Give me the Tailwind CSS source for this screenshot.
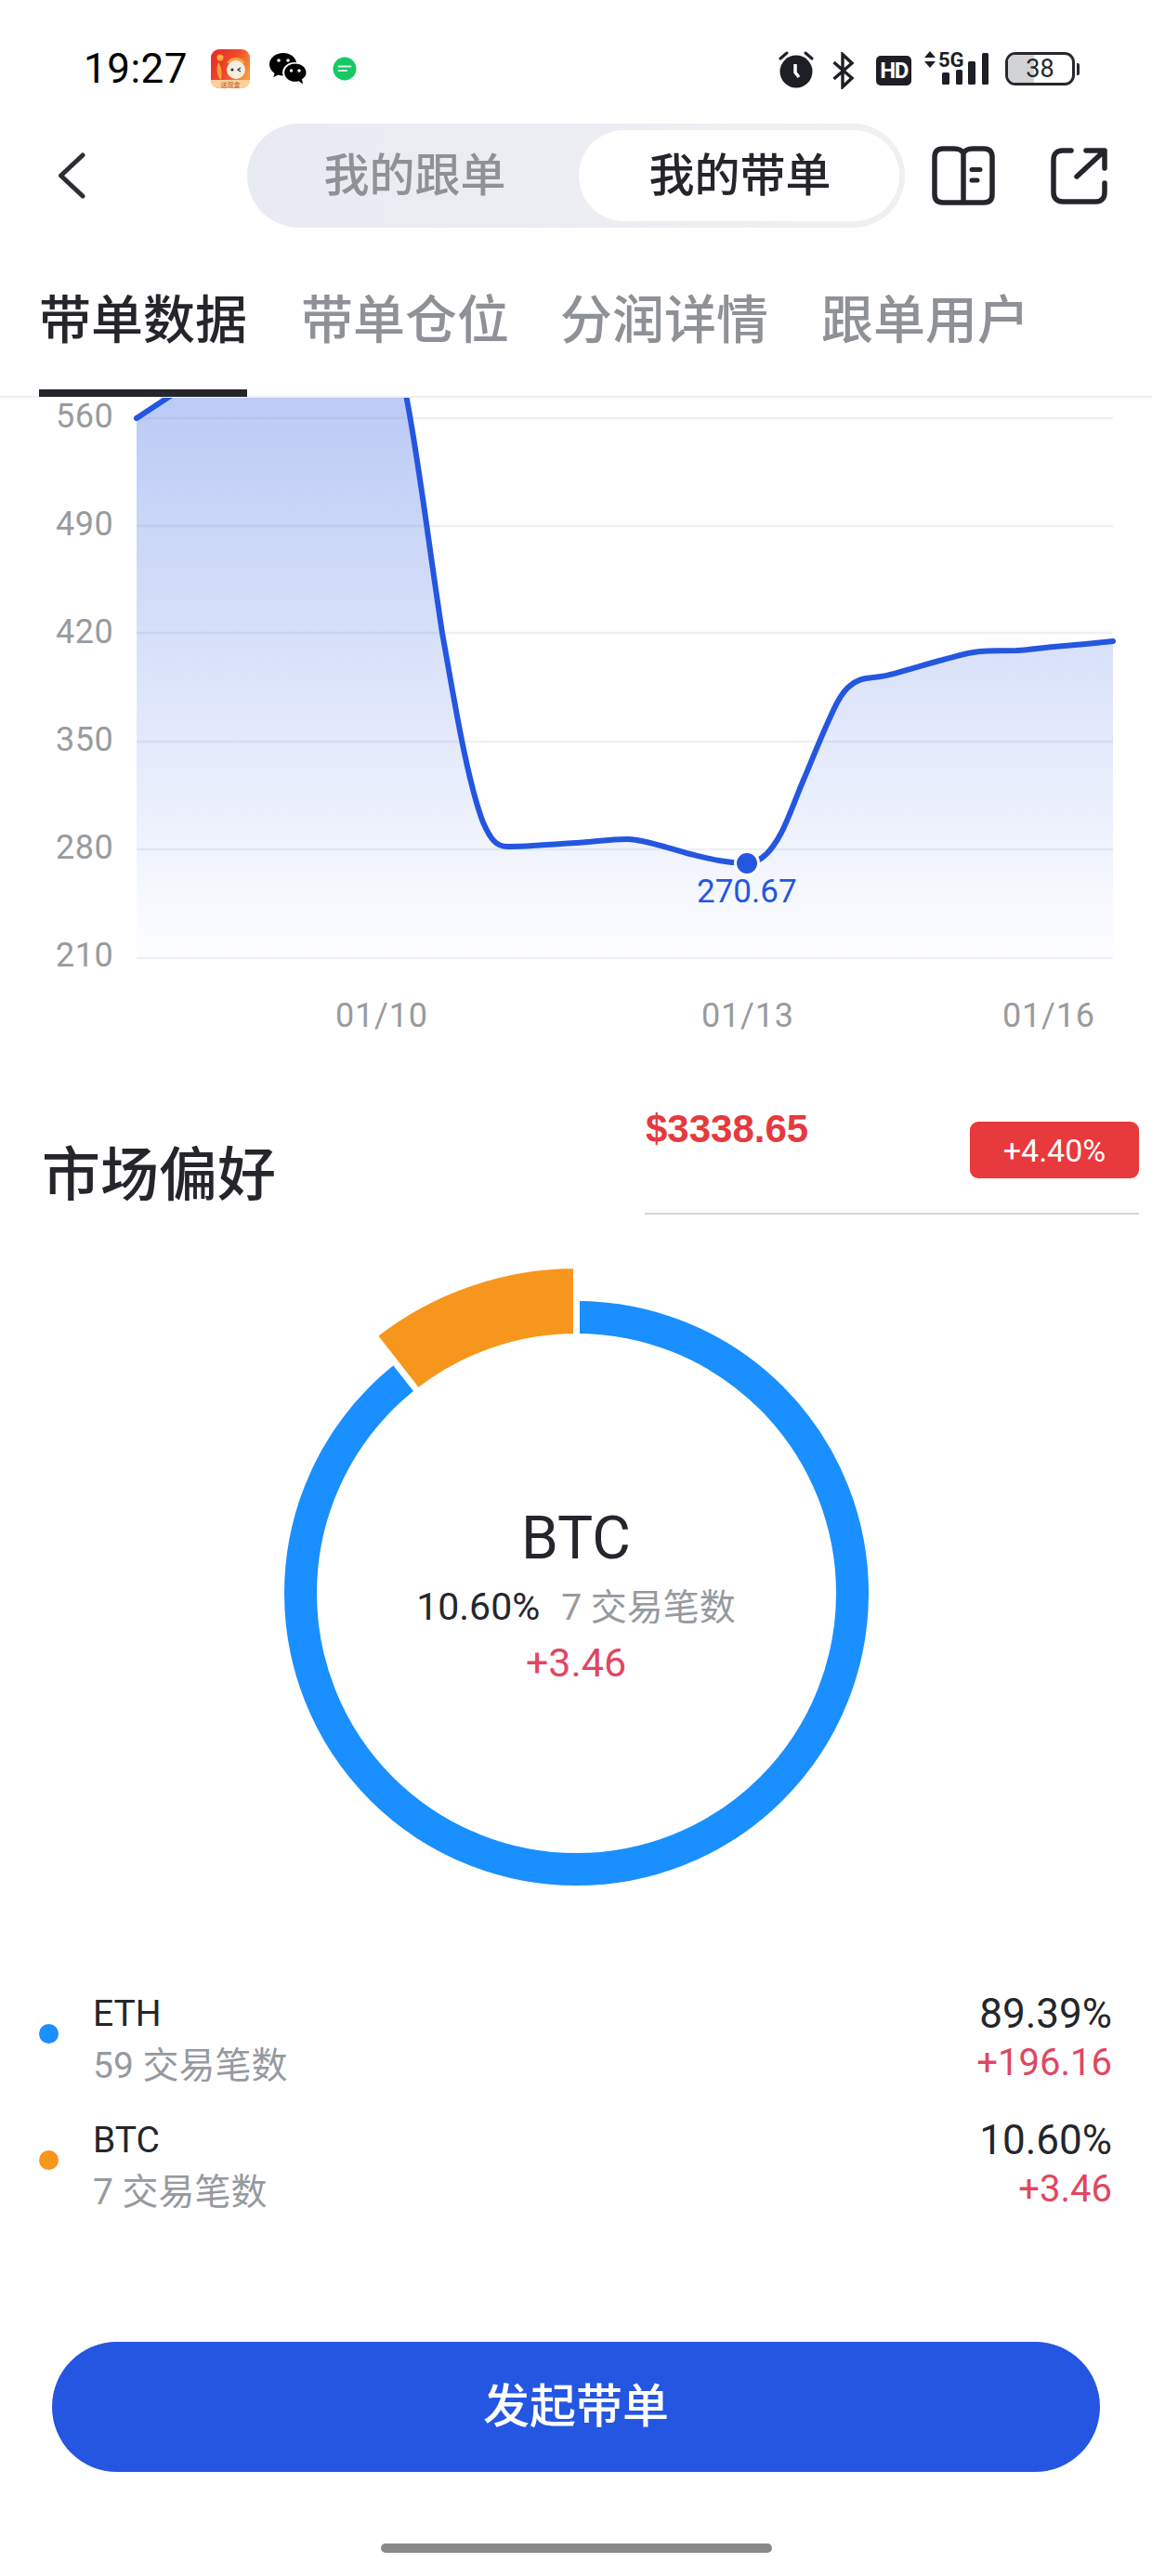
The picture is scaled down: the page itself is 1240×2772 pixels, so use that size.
<!DOCTYPE html>
<html lang="zh">
<head>
<meta charset="utf-8">
<script src="https://cdn.jsdelivr.net/npm/@tailwindcss/browser@4"></script>
</head>
<body class="bg-white">
<div class="w-[1240px] h-[2772px] bg-white overflow-hidden font-['Roboto','Noto_Sans_CJK_SC',sans-serif] text-[#24262b]">

  <!-- status bar -->
  <div class="h-[133px] relative">
    <div class="flex items-center pt-[53px] pl-[90px] h-[95px]">
      <span class="text-[44px] leading-none text-black w-[137px] tracking-[0.500px]">19:27</span>
      <svg class="w-[42px] h-[42px]" viewBox="0 0 42 42">
        <defs><linearGradient id="app" x1="0" y1="0" x2="1" y2="0.6"><stop offset="0" stop-color="#e8262a"/><stop offset="0.55" stop-color="#ef4a2c"/><stop offset="1" stop-color="#f79a3e"/></linearGradient></defs>
        <rect width="42" height="42" rx="9" fill="url(#app)"/>
        <path d="M0 33H42V33A9 9 0 0 1 33 42H9A9 9 0 0 1 0 33Z" fill="#fbd09a"/>
        <circle cx="10" cy="9" r="3.5" fill="#f7b23b"/>
        <path d="M8 14C5 22 7 30 11 33C12 26 12 20 8 14Z" fill="#f7a23b"/>
        <path d="M17 15C20 7 34 7 37 15Z" fill="#f6a33c"/>
        <circle cx="27" cy="22" r="10" fill="#f4ede2"/>
        <circle cx="23" cy="22" r="1.6" fill="#333"/>
        <path d="M32 20L29 22L32 24" stroke="#333" stroke-width="1.3" fill="none"/>
        <text x="21" y="40.5" text-anchor="middle" font-size="7" fill="#b5561c">送现金</text>
      </svg>
      <svg class="w-[40px] h-[34px] ml-[21px]" viewBox="0 0 40 34">
        <path d="M15 0C6.700 0 0 5.500 0 12.300C0 16.200 2.200 19.600 5.600 21.900L4.300 26.300L9.300 23.600C11 24.200 12.800 24.500 14.700 24.500C14.300 23.400 14.100 22.200 14.100 21C14.100 14.800 20 10 27.200 10C27.900 10 28.500 10 29.100 10.100C27.800 4.300 22 0 15 0Z" fill="#000"/>
        <path d="M39.500 21.200C39.500 15.600 34.100 11.600 27.700 11.600C21.300 11.600 16.200 15.900 16.200 21.200C16.200 26.500 21.300 30.800 27.700 30.800C29.100 30.800 30.400 30.600 31.600 30.200L36 33.500L35 28.300C37.800 26.500 39.500 24 39.500 21.200Z" fill="#000"/>
        <circle cx="10" cy="8" r="1.800" fill="#fff"/><circle cx="20" cy="8" r="1.800" fill="#fff"/>
        <circle cx="23.500" cy="19" r="1.700" fill="#fff"/><circle cx="32" cy="19" r="1.700" fill="#fff"/>
      </svg>
      <svg class="w-[26px] h-[26px] ml-[28px]" viewBox="0 0 26 26">
        <circle cx="13" cy="13" r="12.500" fill="#17c964"/>
        <path d="M6.500 10.500H19.500M6.500 15H15" stroke="#d8f7e5" stroke-width="2" stroke-linecap="round"/>
      </svg>
    </div>
    <div class="absolute left-[838px] top-[54px] flex items-start">
      <svg class="w-[38px] h-[41px]" viewBox="0 0 38 41">
        <circle cx="19" cy="23" r="17.500" fill="#1d1f24"/>
        <path d="M2 9L9 3M36 9L29 3" stroke="#1d1f24" stroke-width="3" stroke-linecap="round"/>
        <path d="M18 15V24L22 29" stroke="#fff" stroke-width="3.500" fill="none"/>
      </svg>
      <svg class="w-[24px] h-[40px] ml-[20px] mt-[2px]" viewBox="0 0 24 40">
        <path d="M1.500 11L21 28L11 37.500V2.500L21 12L1.500 29" stroke="#1d1f24" stroke-width="3.400" fill="none" stroke-linejoin="miter"/>
      </svg>
      <div class="w-[38px] h-[32px] mt-[6px] ml-[23px] rounded-[5px] bg-[#1d1f24] text-white flex items-center justify-center font-['Liberation_Sans_Narrow','Roboto',sans-serif] font-bold text-[24px] leading-none tracking-[-1.500px]">HD</div>
      <div class="relative w-[70px] h-[38px] ml-[14px] mt-[1px]">
        <svg class="absolute left-0 top-0 w-[70px] h-[38px]" viewBox="0 0 70 38">
          <path d="M6 0L12 7H0ZM6 18L0 11H12Z" fill="#1d1f24"/>
          <rect x="19" y="23" width="8" height="13" rx="1.500" fill="#1d1f24"/>
          <rect x="34" y="20" width="7" height="16" rx="1.500" fill="#1d1f24"/>
          <rect x="47" y="11" width="8" height="25" rx="1.500" fill="#1d1f24"/>
          <rect x="62" y="2" width="7" height="34" rx="1.500" fill="#1d1f24"/>
        </svg>
        <span class="absolute left-[15px] top-[-1px] text-[22px] leading-[22px] font-bold text-[#1d1f24] font-['Liberation_Sans_Narrow','Roboto',sans-serif]">5G</span>
      </div>
      <div class="relative w-[75px] h-[36px] ml-[17px] mt-[2px] border-[3px] border-[#26282d] rounded-[11px] overflow-hidden">
        <div class="absolute left-0 top-0 bottom-0 w-[28px] bg-[#d2d3d5]"></div>
        <span class="absolute inset-0 flex items-center justify-center text-[27px] leading-none text-[#26282d]">38</span>
      </div>
      <div class="w-[3px] h-[13px] ml-[2px] mt-[14px] rounded-r-[2px] bg-[#26282d]"></div>
    </div>
  </div>

  <!-- nav -->
  <div class="h-[112px] flex items-center relative">
    <svg class="w-[30px] h-[52px] ml-[62px]" viewBox="0 0 30 52">
      <path d="M27 4L3.500 26L27 48" stroke="#2c2e33" stroke-width="5" stroke-linecap="round" stroke-linejoin="round" fill="none"/>
    </svg>
    <div class="w-[708px] h-[112px] ml-[174px] rounded-[56px] bg-gradient-to-r from-[#e9ebf3] to-[#eff0f2] flex items-center relative">
      <div class="w-[357px] text-center text-[49px] leading-none font-medium text-[#8e9196] pt-[1px] pl-[4px]">我的跟单</div>
      <div class="w-[345px] h-[98px] rounded-[49px] bg-white flex items-center justify-center text-[49px] leading-none font-medium text-[#24262b] pl-[2px]">我的带单</div>
    </div>
    <svg class="w-[68px] h-[64px] ml-[29px]" viewBox="0 0 68 64">
      <path d="M34 8C32 4 28 3 24 3H12C6 3 3 6 3 12V52C3 58 6 61 12 61H56C62 61 65 58 65 52V12C65 6 62 3 56 3H44C40 3 36 4 34 8ZM34 8V61" stroke="#24262b" stroke-width="5.500" fill="none" stroke-linejoin="round"/>
      <path d="M43 25.500H52M43 37H49" stroke="#24262b" stroke-width="5" stroke-linecap="round"/>
    </svg>
    <svg class="w-[62px] h-[62px] ml-[60px]" viewBox="0 0 62 62">
      <path d="M22 4H13C6 4 3 8 3 14V49C3 55 6 59 13 59H49C55 59 58 55 58 49V39" stroke="#24262b" stroke-width="5.500" fill="none" stroke-linecap="round"/>
      <path d="M28 32L57 5M38 4H58V23" stroke="#24262b" stroke-width="5.500" fill="none" stroke-linecap="round" stroke-linejoin="round"/>
    </svg>
  </div>

  <!-- tabs -->
  <div class="h-[183px] border-b-2 border-[#eeeff0] pl-[42px] flex items-end text-[#8e9196] font-medium text-[56px] leading-none">
    <div class="w-[224px] h-[117px] border-b-[8px] border-[#24262b] mb-[-1px] text-[#24262b] text-center pt-[7px]">带单数据</div>
    <div class="ml-[58px] h-[116px] pt-[7px] w-[224px]">带单仓位</div>
    <div class="ml-[55px] h-[116px] pt-[7px] w-[224px]">分润详情</div>
    <div class="ml-[57px] h-[116px] pt-[7px]">跟单用户</div>
  </div>

  <!-- chart -->
  <svg class="block w-[1240px] h-[692px]" viewBox="0 428 1240 692">
    <defs>
      <linearGradient id="area" gradientUnits="userSpaceOnUse" x1="0" y1="428" x2="0" y2="1030">
        <stop offset="0" stop-color="#2456e0" stop-opacity="0.31"/>
        <stop offset="1" stop-color="#2456e0" stop-opacity="0.01"/>
      </linearGradient>
    </defs>
    <path fill="url(#area)" d="M147,450 L185,425 L437,425 C450,490 462,590 476,681 C490,760 503,840 520,885 C528,903 534,911 546,911 C570,911 600,908 620,907 C640,906 655,903 675,903 C690,903 715,911 739,918 C760,923 780,929 804,929 C820,928 831,915 841,896 C849,881 858,855 865,839 C873,820 881,800 889,782 C897,764 905,745 915,738 C922,732 928,730 940,729 C955,728 965,724 976,721 C990,717 1003,713 1015,710 C1030,706 1042,702 1055,701 C1070,700 1082,700 1094,700 C1110,699.500 1120,697 1134,696 C1160,694 1180,692 1198,690 V1030 H147 Z"/>
    <g stroke="#7b86a8" stroke-opacity="0.12" stroke-width="2.500">
      <path d="M147 450H1198M147 566H1198M147 681H1198M147 798H1198M147 914H1198M147 1031H1198"/>
    </g>
    <path fill="none" stroke="#2456e0" stroke-width="6" stroke-linecap="round" d="M147,450 L185,425 M437,425 C450,490 462,590 476,681 C490,760 503,840 520,885 C528,903 534,911 546,911 C570,911 600,908 620,907 C640,906 655,903 675,903 C690,903 715,911 739,918 C760,923 780,929 804,929 C820,928 831,915 841,896 C849,881 858,855 865,839 C873,820 881,800 889,782 C897,764 905,745 915,738 C922,732 928,730 940,729 C955,728 965,724 976,721 C990,717 1003,713 1015,710 C1030,706 1042,702 1055,701 C1070,700 1082,700 1094,700 C1110,699.500 1120,697 1134,696 C1160,694 1180,692 1198,690"/>
    <circle cx="804" cy="929" r="14" fill="#fff"/>
    <circle cx="804" cy="929" r="11" fill="#2456e0"/>
    <g fill="#999b9e" font-size="36" letter-spacing="0.500">
      <text x="60" y="460">560</text>
      <text x="60" y="576">490</text>
      <text x="60" y="692">420</text>
      <text x="60" y="808">350</text>
      <text x="60" y="924">280</text>
      <text x="60" y="1040">210</text>
    </g>
    <g fill="#999b9e" font-size="36" letter-spacing="0.800">
      <text x="361" y="1105">01/10</text>
      <text x="755" y="1105">01/13</text>
      <text x="1079" y="1105">01/16</text>
    </g>
    <text x="750" y="971" fill="#2456e0" font-size="35">270.67</text>
  </svg>

  <!-- market preference header -->
  <div class="h-[188px] flex pl-[45px] pr-[14px]">
    <div class="w-[649px] pt-[113px] text-[63px] leading-none font-medium">市场偏好</div>
    <div class="w-[532px] h-[187px] border-b-2 border-[#d4d5d7] flex justify-between">
      <div class="pt-[74px] text-[42px] leading-none font-bold text-[#e53a3e] font-['Liberation_Sans',sans-serif] ml-[1px]">$3338.65</div>
      <div class="mt-[87px] w-[182px] h-[61px] rounded-[9px] bg-[#e8393d] text-white text-[34px] leading-none flex items-center justify-center">+4.40%</div>
    </div>
  </div>

  <!-- donut -->
  <div class="relative h-[760px]">
    <svg class="absolute left-0 top-0 w-[1240px] h-[760px]" viewBox="0 1308 1240 760">
      <circle cx="620.500" cy="1714.500" r="297" fill="none" stroke="#1a8fff" stroke-width="35"/>
      <path d="M620.500 1361.500 A353 353 0 0 0 402.400 1437 L449.900 1497.600 A276 276 0 0 1 620.500 1438.500 Z" fill="#f7961c" stroke="#fff" stroke-width="7"/>
    </svg>
    <div class="absolute left-0 right-0 top-[310px] flex flex-col items-center">
      <div class="text-[64px] leading-[76px]">BTC</div>
      <div class="text-[39px] leading-[50px] mt-[10px] flex items-baseline">
        <span class="text-[41px]">10.60%</span><span class="ml-[23px] text-[#969a9f]">7 交易笔数</span>
      </div>
      <div class="text-[43px] leading-[50px] mt-[9px] text-[#e0475f]">+3.46</div>
    </div>
  </div>

  <!-- legend -->
  <div class="h-[452px] pl-[42px] pr-[43px] pt-[79px]">
    <div class="flex items-center h-[96px]">
      <div class="w-[21px] h-[21px] mb-[14px] rounded-full bg-[#1a8fff]"></div>
      <div class="ml-[37px] flex-1">
        <div class="text-[39px] leading-[50px]">ETH</div>
        <div class="text-[39px] leading-[50px] mt-[6px] text-[#969a9f]">59 交易笔数</div>
      </div>
      <div class="text-right">
        <div class="text-[44px] leading-[50px]">89.39%</div>
        <div class="text-[40px] leading-[50px] mt-[3px] mb-[3px] text-[#e0475f]">+196.16</div>
      </div>
    </div>
    <div class="flex items-center h-[96px] mt-[40px]">
      <div class="w-[21px] h-[21px] mb-[14px] rounded-full bg-[#f7961c]"></div>
      <div class="ml-[37px] flex-1">
        <div class="text-[39px] leading-[50px]">BTC</div>
        <div class="text-[39px] leading-[50px] mt-[6px] text-[#969a9f]">7 交易笔数</div>
      </div>
      <div class="text-right">
        <div class="text-[44px] leading-[50px]">10.60%</div>
        <div class="text-[40px] leading-[50px] mt-[3px] mb-[3px] text-[#e0475f]">+3.46</div>
      </div>
    </div>
  </div>

  <!-- button -->
  <div class="px-[56px]">
    <div class="h-[140px] rounded-[70px] bg-[#2456e2] flex items-center justify-center text-white text-[50px] leading-none font-medium">发起带单</div>
  </div>
  <div class="w-[421px] h-[10px] rounded-full bg-[#888888] mx-auto mt-[77px]"></div>
</div>
</body>
</html>
